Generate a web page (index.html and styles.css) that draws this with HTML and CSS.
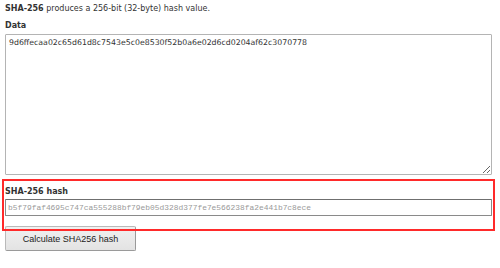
FILE: index.html
```html
<!DOCTYPE html>
<html lang="en">
<head>
	<title>SHA-256 hash calculator</title>
	<meta charset="utf-8">
	<link rel="stylesheet" href="styles.css">
</head>
<body>
	<div id="wrapper">
		<p class="intro"><b>SHA-256</b> produces a 256-bit (32-byte) hash value.</p>
		<div class="field">
			<label for="data">Data</label>
			<textarea id="data" spellcheck="false">9d6ffecaa02c65d61d8c7543e5c0e8530f52b0a6e02d6cd0204af62c3070778</textarea>
		</div>
		<div class="field result">
			<label for="hash">SHA-256 hash</label>
			<input type="text" id="hash" readonly value="b5f79faf4695c747ca555288bf79eb05d328d377fe7e566238fa2e441b7c8ece">
		</div>
		<button id="calc">Calculate SHA256 hash</button>
	</div>
</body>
</html>
```

FILE: styles.css
```css
body {
	margin: 0;
	padding: 0;
	background: white;
	color: #333;
	font-family: "DejaVu Sans", Verdana, sans-serif;
	font-size: 8px;
}

#wrapper {
	width: 487px;
	padding: 3px 0 0 5px;
}

.intro {
	margin: 0;
	line-height: 12px;
}

.field label {
	display: block;
	font-weight: bold;
	line-height: 12px;
}

.field {
	margin-top: 5px;
}

.field label {
	margin-bottom: 2px;
}

textarea {
	display: block;
	box-sizing: border-box;
	width: 487px;
	height: 141px;
	margin: 0;
	padding: 2px 3px;
	border: 1px solid #b4b4b4;
	border-radius: 1px;
	font-family: "DejaVu Sans", Verdana, sans-serif;
	font-size: 7.8px;
	line-height: 12px;
	color: #333;
	outline: none;
}

.field.result {
	margin-top: 7px;
	padding: 4px 0 12px;
	outline: 2px solid #ff2a2a;
	outline-offset: 1px;
}

.field.result label {
	margin-bottom: 1px;
}

input {
	display: block;
	box-sizing: border-box;
	width: 487px;
	height: 17px;
	margin: 0;
	padding: 0 2px;
	border: 1px solid #8a8a8a;
	border-top-color: #6f6f6f;
	border-radius: 1px;
	font-family: "Liberation Mono", "Courier New", monospace;
	font-size: 7.9px;
	color: #999;
	background: white;
	outline: none;
}

button {
	display: block;
	width: 131px;
	height: 25px;
	margin-top: -2px;
	padding: 0;
	background: linear-gradient(#f0f0f0, #e3e3e3);
	border: 1px solid #b9b9b9;
	border-right-color: #9a9a9a;
	border-bottom-color: #9a9a9a;
	border-radius: 2px;
	font-family: "Liberation Sans", Arial, sans-serif;
	font-size: 9px;
	color: #222;
}
```
